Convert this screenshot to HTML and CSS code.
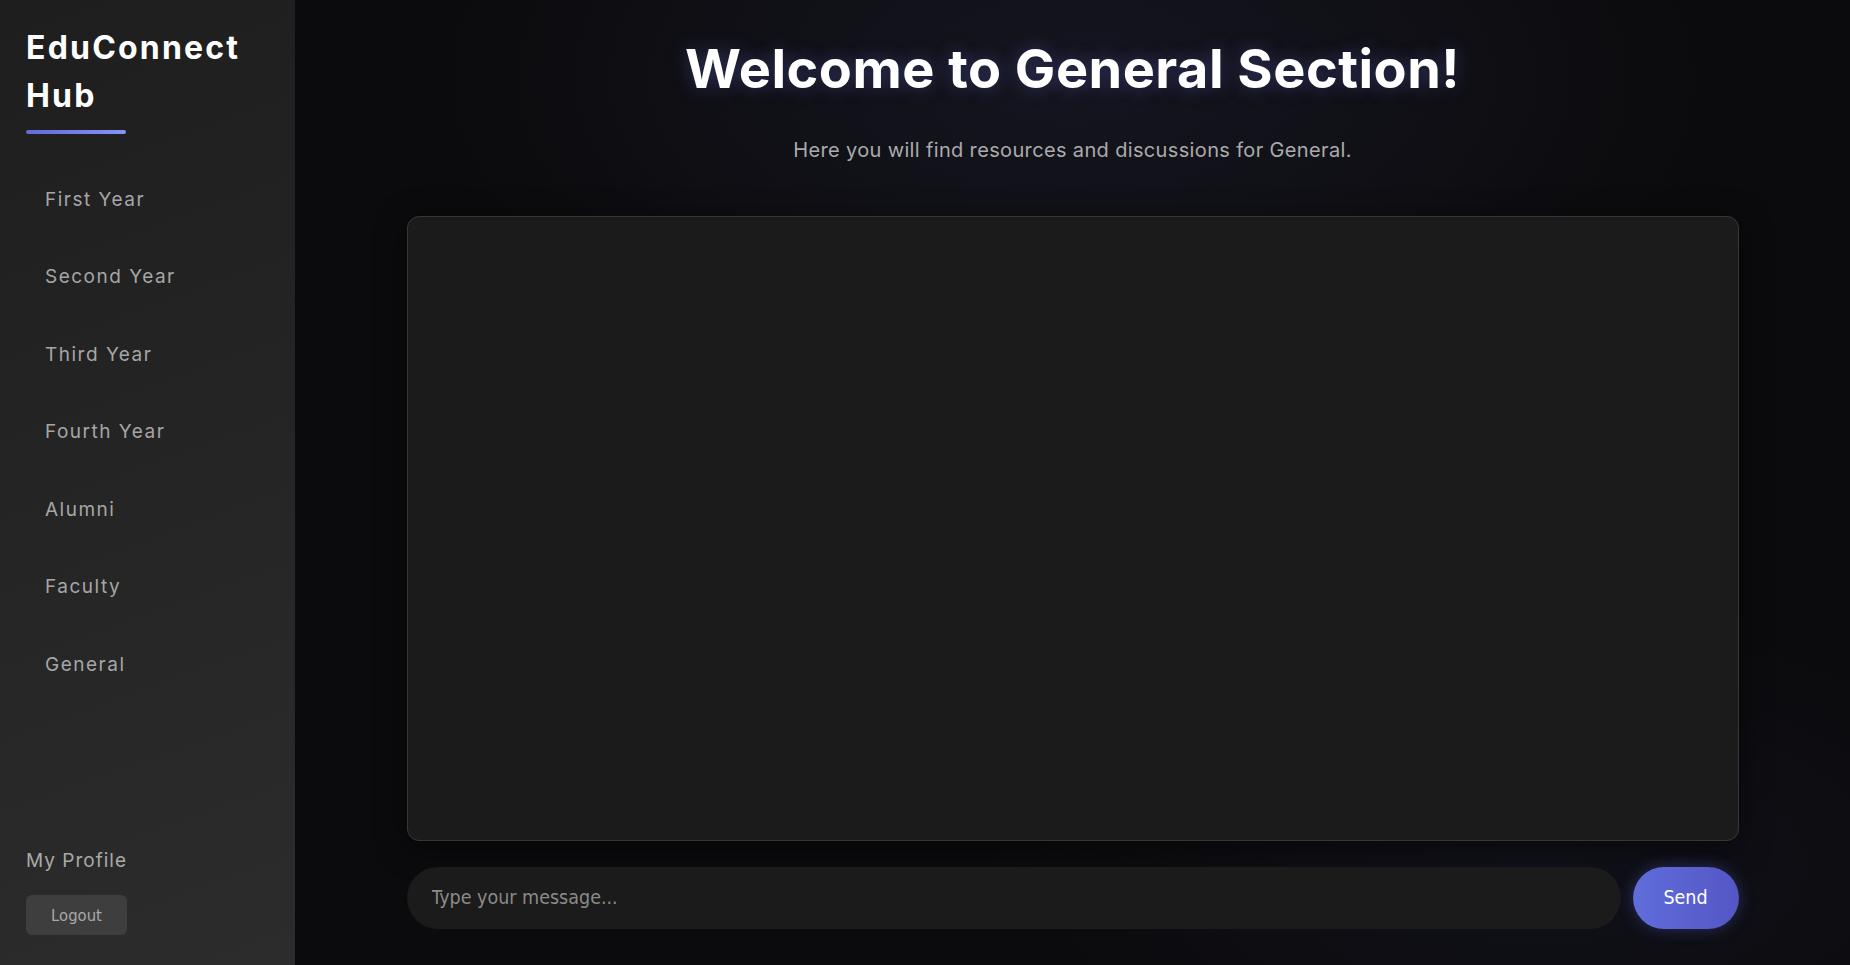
FILE: index.html
```html
<!DOCTYPE html>
<html lang="en">
<head>
<meta charset="utf-8">
<title>EduConnect Hub - General</title>
<link rel="stylesheet" href="styles.css">
</head>
<body>
<div class="app">
  <aside class="sidebar">
    <div class="brand">
      <h1 class="brand-title">EduConnect Hub</h1>
      <div class="brand-bar"></div>
    </div>
    <nav class="nav">
      <a class="nav-link" href="#">First Year</a>
      <a class="nav-link" href="#">Second Year</a>
      <a class="nav-link" href="#">Third Year</a>
      <a class="nav-link" href="#">Fourth Year</a>
      <a class="nav-link" href="#">Alumni</a>
      <a class="nav-link" href="#">Faculty</a>
      <a class="nav-link" href="#">General</a>
    </nav>
    <div class="sidebar-footer">
      <a class="profile-link" href="#">My Profile</a>
      <button class="logout" type="button">Logout</button>
    </div>
  </aside>
  <main class="main">
    <h2 class="title">Welcome to General Section!</h2>
    <p class="subtitle">Here you will find resources and discussions for General.</p>
    <section class="chat">
      <div class="chat-box"></div>
      <form class="chat-form">
        <input class="chat-input" type="text" placeholder="Type your message...">
        <button class="send" type="button">Send</button>
      </form>
    </section>
  </main>
</div>
</body>
</html>
```
FILE: styles.css
```css
html, body {
  margin: 0;
  padding: 0;
  height: 100%;
}

body {
  background: #0b0b0d;
  font-family: "Inter", "Noto Sans", sans-serif;
  overflow: hidden;
}

.app {
  display: flex;
  height: 965px;
}

.sidebar {
  width: 295px;
  flex-shrink: 0;
  box-sizing: border-box;
  padding: 24px 26px 30px 26px;
  display: flex;
  flex-direction: column;
  background: linear-gradient(160deg, #1e1e1e 0%, #242424 45%, #2c2c2c 100%);
}

.brand-title {
  margin: 0;
  color: #ffffff;
  font-size: 32px;
  line-height: 48px;
  font-weight: 700;
  letter-spacing: 2.2px;
}

.brand-bar {
  margin-top: 10px;
  width: 100px;
  height: 4px;
  border-radius: 2px;
  background: linear-gradient(90deg, #5f6bd8, #8593f4);
}

.nav {
  display: flex;
  flex-direction: column;
  margin-top: 27px;
}

.nav-link {
  display: block;
  padding: 23.75px 19px;
  line-height: 30px;
  font-size: 19px;
  color: #a6a6a6;
  text-decoration: none;
  letter-spacing: 1.5px;
}

.sidebar-footer {
  margin-top: auto;
  display: flex;
  flex-direction: column;
  align-items: flex-start;
}

.profile-link {
  font-size: 19px;
  line-height: 30px;
  color: #a9a9a9;
  text-decoration: none;
  letter-spacing: 1px;
}

.logout {
  margin-top: 19px;
  width: 101px;
  height: 40px;
  border: none;
  border-radius: 6px;
  background: #3e3e3e;
  color: #a9a9a9;
  font-family: "DejaVu Sans Condensed", "DejaVu Sans", sans-serif;
  font-stretch: condensed;
  font-size: 16.5px;
  padding: 0;
}

.main {
  flex: 1;
  padding-top: 34.6px;
  display: flex;
  flex-direction: column;
  align-items: center;
  background:
    radial-gradient(ellipse 60% 50% at 50% 8%, rgba(22, 22, 34, 0.9), rgba(11, 11, 13, 0) 70%),
    radial-gradient(ellipse 50% 40% at 80% 90%, rgba(18, 18, 30, 0.7), rgba(11, 11, 13, 0) 70%),
    #0b0b0d;
}

.title {
  margin: 0;
  color: #ffffff;
  font-size: 54px;
  line-height: 67px;
  font-weight: 700;
  letter-spacing: 0.5px;
  text-shadow: 0 0 18px rgba(110, 120, 230, 0.35);
}

.subtitle {
  margin: 34.2px 0 0 0;
  color: #ababab;
  font-size: 20px;
  line-height: 28px;
  font-weight: 400;
  letter-spacing: 0.35px;
}

.chat {
  width: 1332px;
  margin-top: 52px;
  display: flex;
  flex-direction: column;
}

.chat-box {
  box-sizing: border-box;
  height: 625px;
  border: 1px solid #363636;
  border-radius: 12px;
  background: #1b1b1b;
  box-shadow: 0 6px 30px rgba(0, 0, 0, 0.5);
}

.chat-form {
  margin: 26px 0 0 0;
  display: flex;
  gap: 12px;
}

.chat-input {
  flex: 1;
  height: 62px;
  box-sizing: border-box;
  border: none;
  outline: none;
  border-radius: 31px;
  background: #1b1b1b;
  padding: 0 25px;
  color: #dddddd;
  font-family: "DejaVu Sans Condensed", "DejaVu Sans", sans-serif;
  font-stretch: condensed;
  font-size: 19.5px;
}

.chat-input::placeholder {
  color: #8a8a8a;
}

.send {
  width: 106px;
  height: 62px;
  border: none;
  border-radius: 31px;
  background: linear-gradient(90deg, #5f6ddb, #5456c4);
  color: #ffffff;
  font-family: "DejaVu Sans Condensed", "DejaVu Sans", sans-serif;
  font-stretch: condensed;
  font-size: 19.5px;
  padding: 0;
  box-shadow: 0 0 16px rgba(95, 105, 220, 0.35);
}
```
